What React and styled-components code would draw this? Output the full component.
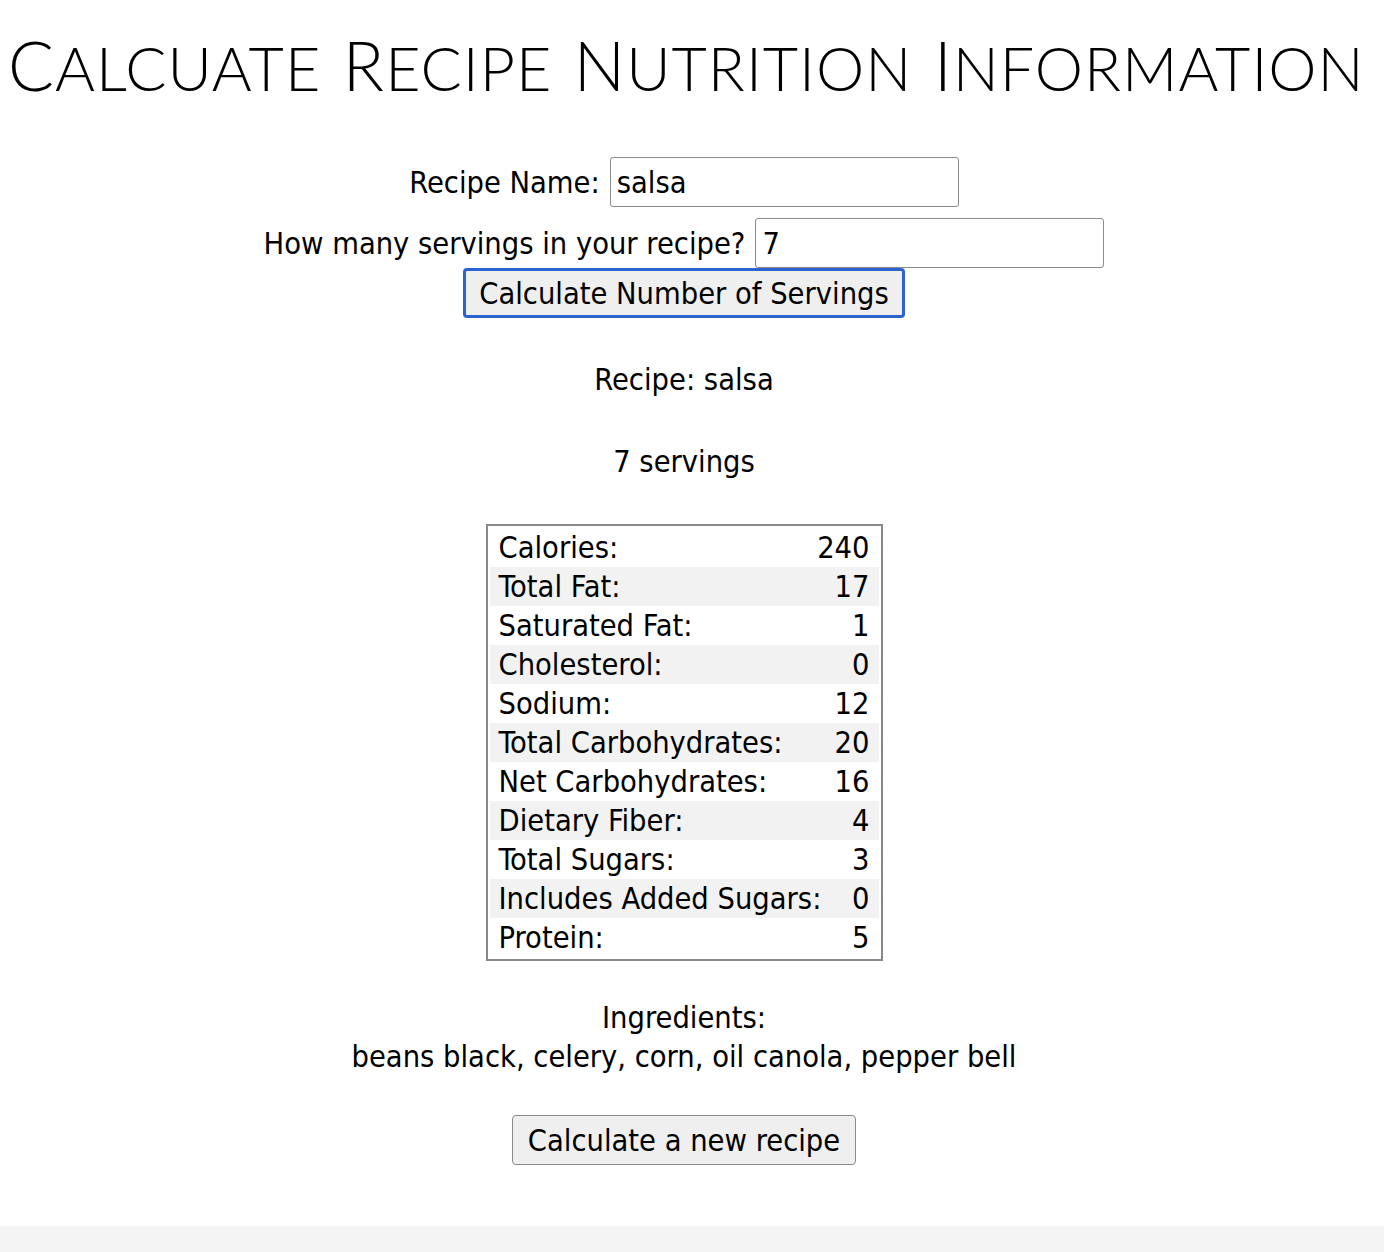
import styled, { createGlobalStyle } from 'styled-components';

const Global = createGlobalStyle`
    html, body {
        margin: 0;
        padding: 0;
        background: #ffffff;
    }
    body {
        font-family: "DejaVu Sans Condensed", "DejaVu Sans", sans-serif;
        color: #000;
    }
`

const Page = styled.div`
    min-height: 1252px;
    display: flex;
    flex-direction: column;
`
const Main = styled.div`
    flex: 1;
    display: flex;
    flex-direction: column;
    align-items: center;
    padding: 0 24px 0 8px;
`
const Title = styled.h1`
    align-self: stretch;
    margin: 24px 0 0;
    font-family: "Lato", sans-serif;
    font-weight: 300;
    text-transform: uppercase;
    font-size: 61px;
    line-height: 82px;
    letter-spacing: 1px;
    word-spacing: 4px;
    white-space: nowrap;
    text-align: left;
`
const Initial = styled.span`
    font-size: 68px;
`
const Form = styled.form`
    margin-top: 48px;
    display: flex;
    flex-direction: column;
    align-items: center;
`
const Field = styled.div`
    display: flex;
    align-items: center;
    gap: 10px;
    font-size: 30.5px;
    margin-bottom: ${p => (p.$last ? 0 : 11)}px;
`
const Input = styled.input`
    width: 349px;
    height: 50px;
    box-sizing: border-box;
    border: 1px solid #8a8a8a;
    border-radius: 3px;
    padding: 0 6px;
    font-family: inherit;
    font-size: 30.5px;
`
const Button = styled.button`
    box-sizing: border-box;
    height: 50px;
    margin-top: ${p => p.$top || 0}px;
    padding: 0 ${p => (p.$focus ? 13 : 15)}px;
    font-family: inherit;
    font-size: 30.5px;
    color: #000;
    background: #efefef;
    border: ${p => (p.$focus ? '3px solid #2d62d1' : '1px solid #8a8a8a')};
    border-radius: 4px;
`
const Line = styled.p`
    margin: ${p => p.$top || 0}px 0 0;
    font-size: 30.5px;
    line-height: 39px;
    text-align: center;
`
const Table = styled.div`
    margin-top: 43px;
    width: 397px;
    box-sizing: border-box;
    border: 2px solid #888;
    padding: 2px;
`
const Row = styled.div`
    display: flex;
    justify-content: space-between;
    height: 39px;
    align-items: center;
    padding: 0 9px 0 9px;
    font-size: 30.5px;
    background: ${p => (p.$alt ? '#f2f2f2' : '#ffffff')};
`
const Footer = styled.div`
    height: 26px;
    background: #f4f4f4;
`

const facts = [
    ['Calories:', 240],
    ['Total Fat:', 17],
    ['Saturated Fat:', 1],
    ['Cholesterol:', 0],
    ['Sodium:', 12],
    ['Total Carbohydrates:', 20],
    ['Net Carbohydrates:', 16],
    ['Dietary Fiber:', 4],
    ['Total Sugars:', 3],
    ['Includes Added Sugars:', 0],
    ['Protein:', 5],
]

const Word = ({ text }) => (
    <>
        <Initial>{text[0]}</Initial>{text.slice(1)}
    </>
)

const App = () => {
  return (
    <Page>
        <Global />
        <Main>
            <Title>
                <Word text="Calcuate" /> <Word text="Recipe" /> <Word text="Nutrition" /> <Word text="Information" />
            </Title>
            <Form onSubmit={e => e.preventDefault()}>
                <Field>
                    <label>Recipe Name:</label>
                    <Input defaultValue="salsa" />
                </Field>
                <Field $last>
                    <label>How many servings in your recipe?</label>
                    <Input defaultValue="7" />
                </Field>
                <Button $focus>Calculate Number of Servings</Button>
            </Form>
            <Line $top={42}>Recipe: salsa</Line>
            <Line $top={43}>7 servings</Line>
            <Table>
                {facts.map(([name, value], i) => (
                    <Row key={name} $alt={i % 2 === 1}>
                        <span>{name}</span>
                        <span>{value}</span>
                    </Row>
                ))}
            </Table>
            <Line $top={37}>Ingredients:</Line>
            <Line>beans black, celery, corn, oil canola, pepper bell</Line>
            <Button $top={39}>Calculate a new recipe</Button>
        </Main>
        <Footer />
    </Page>
  )
}

export default App
